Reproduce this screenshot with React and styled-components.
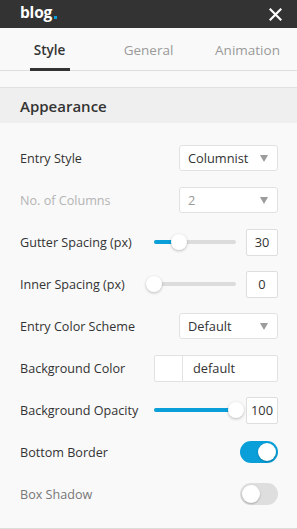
import React from "react";
import styled, { createGlobalStyle } from "styled-components";

const GlobalStyle = createGlobalStyle`
  html, body {
    margin: 0;
    padding: 0;
    background: #f9f9f9;
  }
  body {
    font-family: "Open Sans", "Noto Sans", sans-serif;
    color: #333;
  }
  * { box-sizing: border-box; }
`;

const Panel = styled.div`
  width: 297px;
  height: 529px;
  background: #f9f9f9;
  overflow: hidden;
`;

const TopBar = styled.div`
  height: 28px;
  background: #333;
  display: flex;
  align-items: center;
  justify-content: space-between;
  padding: 0 15px 0 20px;
`;

const Logo = styled.div`
  color: #fff;
  font-weight: 700;
  font-size: 15.5px;
  letter-spacing: -0.2px;
  line-height: 1;
  padding-bottom: 2px;
  display: flex;
  align-items: flex-end;
`;

const Dot = styled.span`
  width: 3px;
  height: 3px;
  margin: 0 0 2px 2px;
  background: #0a9fd8;
`;

const CloseBtn = styled.div`
  width: 14px;
  height: 14px;
  display: flex;
  align-items: center;
  justify-content: center;
`;

const Tabs = styled.div`
  display: flex;
  height: 43px;
  border-bottom: 1px solid #dedede;
`;

const Tab = styled.div`
  flex: 1;
  display: flex;
  align-items: center;
  justify-content: center;
  position: relative;
  font-size: 13.5px;
  font-weight: ${({ $active }) => ($active ? 600 : 400)};
  color: ${({ $active }) => ($active ? "#333" : "#9a9a9a")};
  padding-top: 1px;

  &::after {
    content: "";
    display: ${({ $active }) => ($active ? "block" : "none")};
    position: absolute;
    left: 50%;
    bottom: -1px;
    width: 40px;
    margin-left: -20px;
    height: 3px;
    background: #333;
  }
`;

const SectionHead = styled.div`
  margin-top: 16px;
  height: 36px;
  border-top: 1px solid #e0e0e0;
  background: #efefef;
  display: flex;
  align-items: center;
  padding-left: 20px;
  font-size: 15px;
  font-weight: 600;
  color: #333;
`;

const Fields = styled.div`
  padding: 14px 19px 13px 20px;
  border-bottom: 2px solid #dcdcdc;
`;

const Row = styled.div`
  height: 42px;
  display: flex;
  align-items: center;
  justify-content: space-between;
`;

const Label = styled.div`
  font-size: 12.6px;
  color: ${({ $tone }) =>
    $tone === "disabled" ? "#b4b4b4" : $tone === "muted" ? "#777" : "#333"};
`;

const Select = styled.div`
  width: 99px;
  height: 26px;
  background: #fff;
  border: 1px solid #e2e2e2;
  border-radius: 3px;
  display: flex;
  align-items: center;
  justify-content: space-between;
  padding: 0 9px 0 8px;
  font-size: 12.8px;
  color: ${({ $disabled }) => ($disabled ? "#999" : "#333")};
`;

const Caret = styled.span`
  width: 0;
  height: 0;
  border-left: 4px solid transparent;
  border-right: 4px solid transparent;
  border-top: 7px solid #9c9c9c;
`;

const SliderGroup = styled.div`
  display: flex;
  align-items: center;
  gap: 10px;
`;

const Track = styled.div`
  position: relative;
  width: 82px;
  height: 4px;
  border-radius: 2px;
  background: #dcdcdc;
`;

const Fill = styled.div`
  position: absolute;
  left: 0;
  top: 0;
  height: 4px;
  border-radius: 2px;
  background: #0a9fd8;
`;

const Thumb = styled.div`
  position: absolute;
  top: 50%;
  width: 16px;
  height: 16px;
  margin: -8px 0 0 -8px;
  border-radius: 50%;
  background: #fff;
  box-shadow: 0 1px 3px rgba(0, 0, 0, 0.25);
`;

const NumBox = styled.div`
  width: 32px;
  height: 27px;
  background: #fff;
  border: 1px solid #dedede;
  border-radius: 2px;
  display: flex;
  align-items: center;
  justify-content: center;
  font-size: 12.8px;
  color: #333;
`;

const ColorInput = styled.div`
  width: 124px;
  height: 27px;
  background: #fff;
  border: 1px solid #e2e2e2;
  border-radius: 2px;
  display: flex;
  align-items: center;
  font-size: 12.8px;
  color: #333;
`;

const Swatch = styled.div`
  width: 28px;
  height: 100%;
  border-right: 1px solid #e2e2e2;
`;

const ColorText = styled.div`
  padding-left: 10px;
`;

const Toggle = styled.div`
  position: relative;
  width: 38px;
  height: 22px;
  border-radius: 11px;
  background: ${({ $on }) => ($on ? "#0a9fd8" : "#dedede")};

  &::after {
    content: "";
    position: absolute;
    top: 2px;
    left: ${({ $on }) => ($on ? "18px" : "2px")};
    width: 18px;
    height: 18px;
    border-radius: 50%;
    background: #fff;
    box-shadow: 0 1px 2px rgba(0, 0, 0, 0.25);
  }
`;

const Slider = ({ value, max = 100 }) => {
  const pct = (value / max) * 100;
  return (
    <SliderGroup>
      <Track>
        <Fill style={{ width: `${pct}%` }} />
        <Thumb style={{ left: `${pct}%` }} />
      </Track>
      <NumBox>{value}</NumBox>
    </SliderGroup>
  );
};

const App = () => {
  return (
    <Panel>
      <GlobalStyle />
      <TopBar>
        <Logo>
          blog
          <Dot />
        </Logo>
        <CloseBtn>
          <svg width="13" height="13" viewBox="0 0 13 13">
            <path
              d="M1.5 1.5 L11.5 11.5 M11.5 1.5 L1.5 11.5"
              stroke="#fff"
              strokeWidth="2.2"
              strokeLinecap="square"
            />
          </svg>
        </CloseBtn>
      </TopBar>

      <Tabs>
        <Tab $active>Style</Tab>
        <Tab>General</Tab>
        <Tab>Animation</Tab>
      </Tabs>

      <SectionHead>Appearance</SectionHead>

      <Fields>
        <Row>
          <Label>Entry Style</Label>
          <Select>
            Columnist <Caret />
          </Select>
        </Row>
        <Row>
          <Label $tone="disabled">No. of Columns</Label>
          <Select $disabled>
            2 <Caret />
          </Select>
        </Row>
        <Row>
          <Label>Gutter Spacing (px)</Label>
          <Slider value={30} />
        </Row>
        <Row>
          <Label>Inner Spacing (px)</Label>
          <Slider value={0} />
        </Row>
        <Row>
          <Label>Entry Color Scheme</Label>
          <Select>
            Default <Caret />
          </Select>
        </Row>
        <Row>
          <Label>Background Color</Label>
          <ColorInput>
            <Swatch />
            <ColorText>default</ColorText>
          </ColorInput>
        </Row>
        <Row>
          <Label>Background Opacity</Label>
          <Slider value={100} />
        </Row>
        <Row>
          <Label>Bottom Border</Label>
          <Toggle $on />
        </Row>
        <Row>
          <Label $tone="muted">Box Shadow</Label>
          <Toggle />
        </Row>
      </Fields>
    </Panel>
  );
};

export default App;
